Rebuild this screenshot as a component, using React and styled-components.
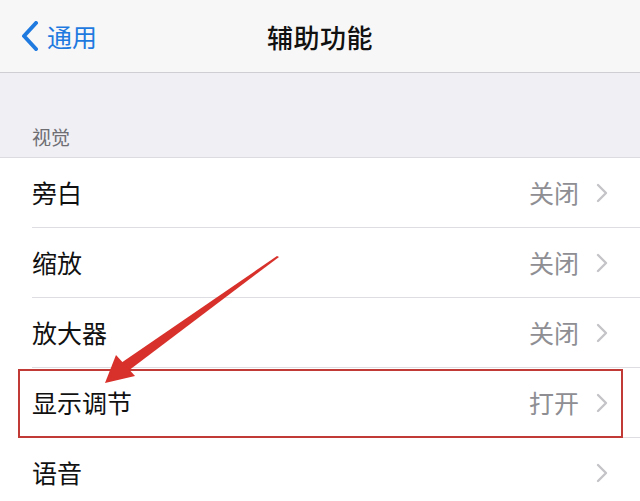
import React from 'react';
import styled, { createGlobalStyle } from 'styled-components';

const GlobalStyle = createGlobalStyle`
  html, body {
    margin: 0;
    padding: 0;
    background: #ffffff;
    overflow: hidden;
  }
  body {
    font-family: 'Noto Sans CJK SC', 'Noto Sans', sans-serif;
  }
`;

const Screen = styled.div`
  position: relative;
  width: 640px;
  height: 501px;
  overflow: hidden;
  background: #ffffff;
`;

const NavBar = styled.header`
  height: 72px;
  display: grid;
  grid-template-columns: 1fr auto 1fr;
  align-items: center;
  background: #f7f7f8;
  border-bottom: 1px solid #cfcfd3;
`;

const BackButton = styled.div`
  display: flex;
  align-items: center;
  gap: 7px;
  padding-left: 20px;
  color: #1f7ae0;
  font-size: 25px;
  line-height: 1;
`;

const Title = styled.h1`
  margin: 0;
  font-size: 26px;
  font-weight: 500;
  color: #111111;
  letter-spacing: 0.5px;
`;

const GroupHeader = styled.div`
  height: 85px;
  box-sizing: border-box;
  display: flex;
  align-items: flex-end;
  padding: 0 0 7px 32px;
  background: #efeff4;
  border-bottom: 1px solid #dcdce0;
  color: #6d6d72;
  font-size: 19px;
`;

const List = styled.ul`
  list-style: none;
  margin: 0;
  padding: 0;
  background: #ffffff;
`;

const Row = styled.li`
  position: relative;
  height: 70px;
  display: flex;
  align-items: center;
  padding: 0 32px;
  box-sizing: border-box;

  &::before {
    content: '';
    position: absolute;
    left: 32px;
    right: 0;
    bottom: 0;
    height: 1px;
    background: #dedee2;
  }

  ${({ $highlight }) =>
    $highlight &&
    `
    &::after {
      content: '';
      position: absolute;
      left: 18px;
      right: 17px;
      top: 1px;
      bottom: 0;
      border: 2px solid #c23a36;
      pointer-events: none;
      z-index: 2;
    }
  `}
`;

const Label = styled.span`
  flex: 1;
  font-size: 25px;
  color: #111111;
  margin-top: -2px;
`;

const Value = styled.span`
  font-size: 25px;
  color: #8e8e93;
  margin-right: 17px;
  margin-top: -2px;
`;

const Chevron = () => (
  <svg width="12" height="20" viewBox="0 0 12 20">
    <path d="M2 2 L10 10 L2 18" fill="none" stroke="#c4c4c8" strokeWidth="2.4" strokeLinecap="round" strokeLinejoin="round" />
  </svg>
);

const BackChevron = () => (
  <svg width="20" height="30" viewBox="0 0 20 30">
    <path d="M16 2 L4 15 L16 28" fill="none" stroke="#1f7ae0" strokeWidth="4" strokeLinecap="round" strokeLinejoin="round" />
  </svg>
);

const ArrowLayer = styled.svg`
  position: absolute;
  left: 0;
  top: 0;
  pointer-events: none;
  z-index: 3;
`;

const items = [
  { label: '旁白', value: '关闭' },
  { label: '缩放', value: '关闭' },
  { label: '放大器', value: '关闭' },
  { label: '显示调节', value: '打开', highlight: true },
  { label: '语音' },
];

export default function App() {
  return (
    <Screen>
      <GlobalStyle />
      <NavBar>
        <BackButton>
          <BackChevron />
          <span>通用</span>
        </BackButton>
        <Title>辅助功能</Title>
        <div />
      </NavBar>
      <GroupHeader>视觉</GroupHeader>
      <List>
        {items.map((it) => (
          <Row key={it.label} $highlight={it.highlight}>
            <Label>{it.label}</Label>
            {it.value && <Value>{it.value}</Value>}
            <Chevron />
          </Row>
        ))}
      </List>
      <ArrowLayer width="640" height="501" viewBox="0 0 640 501">
        <polygon points="279,257 128,371 121,363 277,256" fill="#d8302a" />
        <polygon points="105,383 116,355 135,376" fill="#d8302a" />
      </ArrowLayer>
    </Screen>
  );
}
